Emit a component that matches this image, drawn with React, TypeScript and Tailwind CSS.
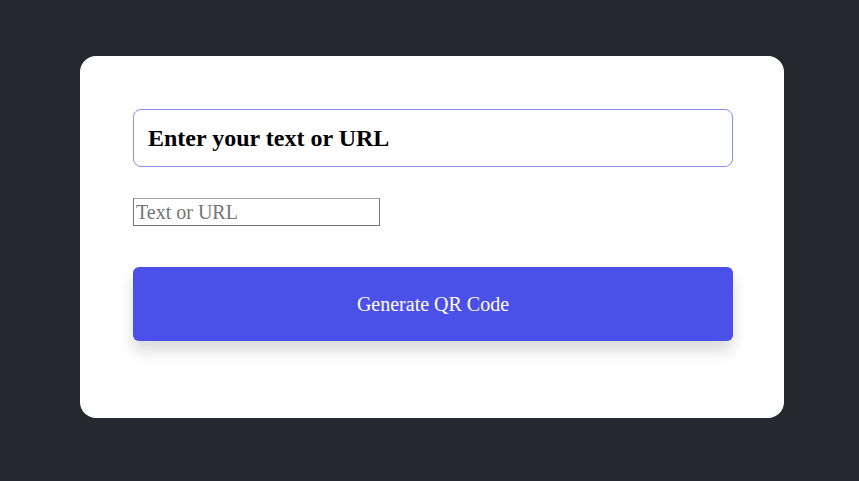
export default function App() {
  return (
    <div className="min-h-screen w-full bg-[#25282d] pt-[56px] pl-[80px]" style={{ fontFamily: '"Liberation Serif", serif' }}>
      <div className="w-[704px] h-[362px] bg-white rounded-2xl pl-[53px] pr-[51px] pt-[53px]">
        <div className="h-[58px] border border-[#8c8ef2] rounded-lg flex items-center pl-[14px]">
          <h1 className="text-[24px] font-bold text-black">Enter your text or URL</h1>
        </div>
        <input
          type="text"
          placeholder="Text or URL"
          className="mt-[31px] block w-[247px] h-[28px] border border-[#767676] border-t-[#a0a0a0] px-[2px] text-[20px] placeholder:text-[#757575] outline-none"
          style={{ fontFamily: '"Liberation Serif", serif' }}
        />
        <button className="mt-[41px] w-full h-[74px] rounded-md bg-[#4a50e8] text-white text-[20px] shadow-[0_10px_15px_rgba(0,0,0,0.15)]">
          Generate QR Code
        </button>
      </div>
    </div>
  );
}
